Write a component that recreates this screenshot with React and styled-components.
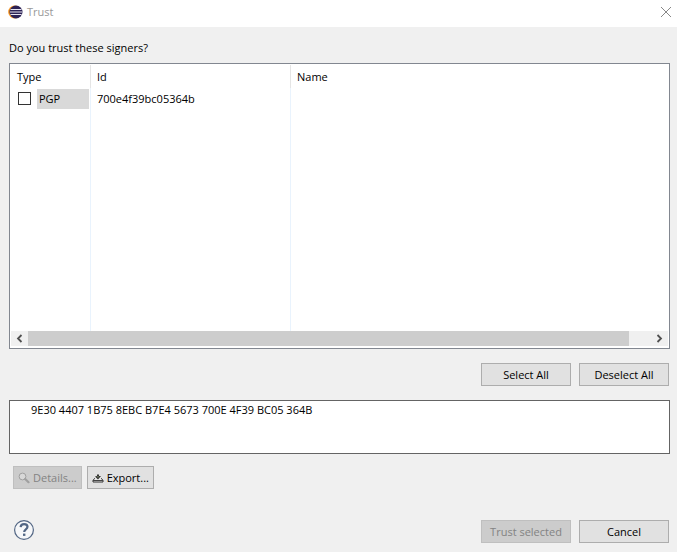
import React, { useState } from "react";
import styled, { createGlobalStyle } from "styled-components";

const GlobalStyle = createGlobalStyle`
  *, *::before, *::after { box-sizing: border-box; }
  body { margin: 0; background: #f0f0f0; }
  body, button, input, textarea, table {
    font-family: "Open Sans", "Noto Sans", sans-serif;
    font-size: 11px;
    line-height: 16px;
    color: #000;
  }
`;

const Dialog = styled.main`
  display: flex;
  flex-direction: column;
  min-height: 100vh;
  background: #f0f0f0;
`;

const TitleBar = styled.header`
  display: flex;
  align-items: center;
  height: 27px;
  padding: 0 5px 4px 8px;
  background: #fff;
`;

const Title = styled.h1`
  flex: 1;
  margin: 0 0 0 4px;
  font-size: 11px;
  font-weight: 400;
  color: #999;
`;

const IconButton = styled.button`
  display: flex;
  align-items: center;
  justify-content: center;
  padding: 0;
  border: 0;
  background: transparent;
`;

const Content = styled.section`
  display: flex;
  flex: 1;
  flex-direction: column;
  padding: 13px 7px 9px 9px;
`;

const Prompt = styled.h2`
  margin: 0 0 7px;
  font-size: 11px;
  font-weight: 400;
`;

const SignerPanel = styled.div`
  display: flex;
  flex: 1;
  flex-direction: column;
  padding: 1px 1px 2px;
  border: 1px solid #828790;
  background: #fff;
`;

const SignerTable = styled.table`
  flex: 1;
  width: 100%;
  height: 265px;
  border-collapse: separate;
  border-spacing: 0;
  table-layout: fixed;
`;

const Column = styled.col`
  width: ${(p) => p.$width || "auto"};
`;

const HeaderCell = styled.th`
  height: 23px;
  padding: 0 6px;
  border-right: ${(p) => (p.$last ? "0" : "1px solid #e5e5e5")};
  font-weight: 400;
  text-align: left;
`;

const Cell = styled.td`
  height: ${(p) => (p.$filler ? "auto" : "21px")};
  padding: ${(p) => (p.$check ? "0 1px 0 7px" : "0 6px")};
  border-right: ${(p) => (p.$last ? "0" : "1px solid #e9f3fd")};
`;

const TypeLabel = styled.label`
  display: flex;
  align-items: center;
  gap: 6px;
`;

const CheckBox = styled.input`
  appearance: none;
  width: 13px;
  height: 13px;
  margin: 0;
  border: 1px solid #333;
  background: #fff;
  &:checked { box-shadow: inset 0 0 0 2px #fff; background: #333; }
`;

const TypeName = styled.span`
  flex: 1;
  padding: 2px;
  background: #d9d9d9;
`;

const ScrollBar = styled.div`
  display: flex;
  height: 15px;
  background: #f0f0f0;
`;

const ScrollArrow = styled(IconButton)`
  width: 17px;
`;

const ScrollTrack = styled.div`
  display: flex;
  flex: 1;
`;

const ScrollThumb = styled.div`
  width: 96.5%;
  background: #cdcdcd;
`;

const ButtonRow = styled.div`
  display: flex;
  align-items: center;
  justify-content: ${(p) => (p.$start ? "flex-start" : "flex-end")};
  gap: ${(p) => (p.$start ? "5px" : "8px")};
  margin: ${(p) => (p.$start ? "12px 4px 0" : "14px 1px")};
`;

const PushButton = styled.button`
  display: flex;
  align-items: center;
  justify-content: center;
  gap: 3px;
  min-width: ${(p) => (p.$compact ? "0" : "90px")};
  height: 23px;
  padding: 0 4px;
  border: 1px solid #adadad;
  border-radius: 0;
  background: #e1e1e1;
  white-space: nowrap;
  &:disabled {
    border-color: #bfbfbf;
    background: #ccc;
    color: #838383;
  }
`;

const Fingerprint = styled.textarea`
  display: block;
  width: 100%;
  height: 54px;
  padding: 1px 21px;
  border: 1px solid #646464;
  border-radius: 0;
  outline: 0;
  resize: none;
  background: #fff;
`;

const Footer = styled.footer`
  display: flex;
  align-items: flex-start;
  gap: 8px;
  margin: 31px 1px 0 5px;
`;

const HelpButton = styled(IconButton)`
  margin-right: auto;
`;

function EclipseLogo() {
  return (
    <svg width="15" height="14" viewBox="0 0 15 14" aria-hidden="true">
      <circle cx="6.7" cy="7" r="6.5" fill="#f7941e" />
      <circle cx="8" cy="7" r="6.5" fill="#2c2255" />
      <path d="M2.5 4.5h11M2 7h12M2.5 9.5h11" stroke="#e6e4f0" strokeWidth="1.2" />
    </svg>
  );
}

function CloseIcon() {
  return (
    <svg width="12" height="12" viewBox="0 0 12 12" aria-hidden="true">
      <path d="M1 1l10 10M11 1L1 11" stroke="#888" strokeWidth="1" />
    </svg>
  );
}

function ArrowIcon({ right }) {
  return (
    <svg width="7" height="9" viewBox="0 0 7 9" aria-hidden="true">
      <path d={right ? "M1.5 1L5 4.5 1.5 8" : "M5.5 1L2 4.5 5.5 8"} fill="none" stroke="#505050" strokeWidth="1.8" />
    </svg>
  );
}

function SearchIcon() {
  return (
    <svg width="12" height="12" viewBox="0 0 12 12" aria-hidden="true">
      <circle cx="4.5" cy="4.5" r="3.4" fill="#d8d8d8" stroke="#a0a0a0" />
      <path d="M7.2 7l3.3 3.2" stroke="#a0a0a0" strokeWidth="2.2" strokeLinecap="round" />
    </svg>
  );
}

function ExportIcon() {
  return (
    <svg width="12" height="10" viewBox="0 0 12 10" aria-hidden="true">
      <path d="M3 5.5H2.5L1 7.5V9h10V7.5L9.5 5.5H9" fill="#e8e8e8" stroke="#333" />
      <path d="M1 7.5h10" stroke="#444" />
      <path d="M5 1.5h2V3h2L6 6.5 3 3.5 5 3z" fill="#333" />
      <path d="M5.5 3h1v1.5h-1z" fill="#8b9b72" />
    </svg>
  );
}

function HelpIcon() {
  return (
    <svg width="20" height="20" viewBox="1 1 20 20" aria-hidden="true">
      <circle cx="11" cy="11" r="9.4" fill="#f6f7f9" stroke="#526684" strokeWidth="1.2" />
      <path d="M7.6 8.1C7.8 6 9.2 5.1 11.1 5.1c2 0 3.4 1 3.4 2.7 0 2.6-3.3 2.5-3.3 5.1" fill="none" stroke="#526684" strokeWidth="2.2" />
      <rect x="10" y="14.6" width="2.4" height="2.3" fill="#526684" />
    </svg>
  );
}

const signers = [{ type: "PGP", id: "700e4f39bc05364b", name: "" }];

export default function App() {
  const [selected, setSelected] = useState([]);
  const toggle = (id) =>
    setSelected((ids) => (ids.includes(id) ? ids.filter((v) => v !== id) : [...ids, id]));

  return (
    <Dialog>
      <GlobalStyle />
      <TitleBar>
        <EclipseLogo />
        <Title>Trust</Title>
        <IconButton type="button" aria-label="Close"><CloseIcon /></IconButton>
      </TitleBar>
      <Content>
        <Prompt>Do you trust these signers?</Prompt>
        <SignerPanel>
          <SignerTable>
            <colgroup>
              <Column $width="80px" />
              <Column $width="200px" />
              <Column />
            </colgroup>
            <thead>
              <tr>
                <HeaderCell>Type</HeaderCell>
                <HeaderCell>Id</HeaderCell>
                <HeaderCell $last>Name</HeaderCell>
              </tr>
            </thead>
            <tbody>
              {signers.map((s) => (
                <tr key={s.id}>
                  <Cell $check>
                    <TypeLabel>
                      <CheckBox type="checkbox" checked={selected.includes(s.id)} onChange={() => toggle(s.id)} />
                      <TypeName>{s.type}</TypeName>
                    </TypeLabel>
                  </Cell>
                  <Cell>{s.id}</Cell>
                  <Cell $last>{s.name}</Cell>
                </tr>
              ))}
              <tr aria-hidden="true">
                <Cell $filler />
                <Cell $filler />
                <Cell $filler $last />
              </tr>
            </tbody>
          </SignerTable>
          <ScrollBar>
            <ScrollArrow type="button" aria-label="Scroll left"><ArrowIcon /></ScrollArrow>
            <ScrollTrack><ScrollThumb /></ScrollTrack>
            <ScrollArrow type="button" aria-label="Scroll right"><ArrowIcon right /></ScrollArrow>
          </ScrollBar>
        </SignerPanel>
        <ButtonRow>
          <PushButton type="button" onClick={() => setSelected(signers.map((s) => s.id))}>Select All</PushButton>
          <PushButton type="button" onClick={() => setSelected([])}>Deselect All</PushButton>
        </ButtonRow>
        <Fingerprint readOnly aria-label="Fingerprint" defaultValue="9E30 4407 1B75 8EBC B7E4 5673 700E 4F39 BC05 364B" />
        <ButtonRow $start>
          <PushButton type="button" $compact disabled><SearchIcon />Details...</PushButton>
          <PushButton type="button" $compact><ExportIcon />Export...</PushButton>
        </ButtonRow>
        <Footer>
          <HelpButton type="button" aria-label="Help"><HelpIcon /></HelpButton>
          <PushButton type="button" disabled={selected.length === 0}>Trust selected</PushButton>
          <PushButton type="button">Cancel</PushButton>
        </Footer>
      </Content>
    </Dialog>
  );
}
